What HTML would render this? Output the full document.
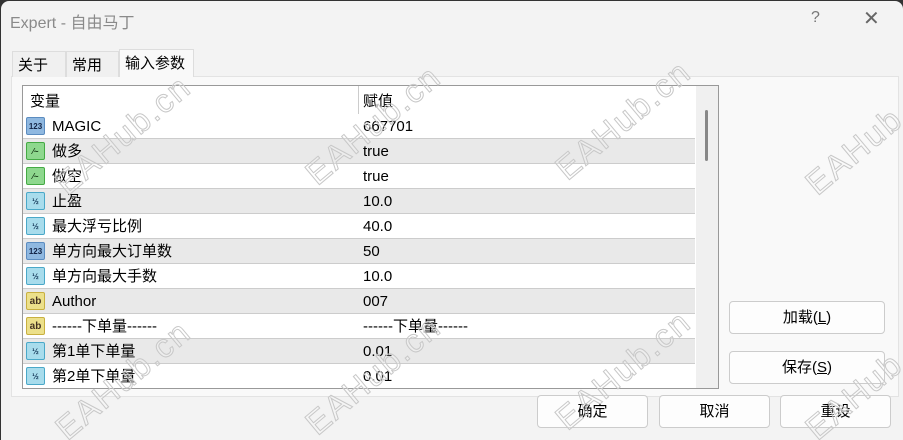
<!DOCTYPE html><html><head><meta charset="utf-8"><style>
*{margin:0;padding:0;box-sizing:border-box}
html,body{width:903px;height:440px;overflow:hidden}
body{background:#333;font-family:"Liberation Sans","Noto Sans CJK SC",sans-serif;font-size:15px;color:#000;position:relative}
.win{position:absolute;left:1px;top:1px;width:902px;height:439px;background:#f3f3f3;border-radius:8px 8px 0 0}
.title{position:absolute;left:9px;top:8px;font-size:16px;color:#8a8a8a}
.tb{position:absolute;top:8px;font-size:16px;color:#777}
.tab{position:absolute;top:50px;height:26px;border:1px solid #ddd;border-bottom:none;background:#f0f0f0;font-size:15px;padding:2px 5px}
.panel{position:absolute;left:10px;top:75px;width:888px;height:321px;background:#f9f9f9;border:1px solid #e3e3e3}
.tbl{position:absolute;left:21px;top:84px;width:697px;height:304px;border:1px solid #999;background:#fff;overflow:hidden}
.row{position:absolute;left:0;width:672px;height:25px;border-bottom:1px solid #ccc}
.row span{position:absolute;top:0;line-height:25px;font-size:15px}
.c1{left:29px}.c2{left:340px}
.split{position:absolute;left:335px;top:0;width:1px;height:303px;background:#ccc}
.ic{position:absolute;left:3px;top:3px;width:19px;height:18px;border-radius:2px;font-size:8px;font-weight:bold;text-align:center;line-height:17px}
.sb{position:absolute;left:673px;top:0;width:22px;height:303px;background:#f0f0f0}
.thumb{position:absolute;left:9px;top:24px;width:3px;height:51px;background:#888;border-radius:2px}
.btn{position:absolute;height:33px;border:1px solid #ccc;border-radius:4px;background:#fdfdfd;text-align:center;line-height:31px;font-size:15px}
.wm{position:absolute;font-size:33px;font-family:"Liberation Sans",sans-serif;color:rgba(255,255,255,0.2);-webkit-text-stroke:1px #c8c8c8;transform:rotate(-40deg);transform-origin:center;white-space:nowrap;letter-spacing:2px}
</style></head><body><div class="win">
<div class="title">Expert - 自由马丁</div>
<div class="tb" style="left:810px">?</div>
<div class="tb" style="left:862px;font-size:20px;top:5px;color:#666">✕</div>
<div class="panel"></div>
<div class="tab" style="left:11px;width:54px">关于</div>
<div class="tab" style="left:65px;width:53px">常用</div>
<div class="tab" style="left:118px;top:48px;height:28px;width:75px;background:#f9f9f9;border-color:#ddd">输入参数</div>
<div class="tbl">
<div class="split"></div>
<div class="row" style="top:0;height:28px;border-bottom:none"><span style="left:7px;top:3px">变量</span><span class="c2" style="top:3px">赋值</span></div>
<div class="row" style="top:28px;background:#fff"><div class="ic" style="background:#8fb8e0;border:1px solid #5b8cc0;color:#124">123</div><span class="c1">MAGIC</span><span class="c2">667701</span></div>
<div class="row" style="top:53px;background:#e9e9e9"><div class="ic" style="background:#8ed88e;border:1px solid #4a4;color:#131">⁄~</div><span class="c1">做多</span><span class="c2">true</span></div>
<div class="row" style="top:78px;background:#fff"><div class="ic" style="background:#8ed88e;border:1px solid #4a4;color:#131">⁄~</div><span class="c1">做空</span><span class="c2">true</span></div>
<div class="row" style="top:103px;background:#e9e9e9"><div class="ic" style="background:#a8dcec;border:1px solid #4aa8c8;color:#135">½</div><span class="c1">止盈</span><span class="c2">10.0</span></div>
<div class="row" style="top:128px;background:#fff"><div class="ic" style="background:#a8dcec;border:1px solid #4aa8c8;color:#135">½</div><span class="c1">最大浮亏比例</span><span class="c2">40.0</span></div>
<div class="row" style="top:153px;background:#e9e9e9"><div class="ic" style="background:#8fb8e0;border:1px solid #5b8cc0;color:#124">123</div><span class="c1">单方向最大订单数</span><span class="c2">50</span></div>
<div class="row" style="top:178px;background:#fff"><div class="ic" style="background:#a8dcec;border:1px solid #4aa8c8;color:#135">½</div><span class="c1">单方向最大手数</span><span class="c2">10.0</span></div>
<div class="row" style="top:203px;background:#e9e9e9"><div class="ic" style="background:#ece08a;border:1px solid #c8b040;color:#432;font-size:10px">ab</div><span class="c1">Author</span><span class="c2">007</span></div>
<div class="row" style="top:228px;background:#fff"><div class="ic" style="background:#ece08a;border:1px solid #c8b040;color:#432;font-size:10px">ab</div><span class="c1">------下单量------</span><span class="c2">------下单量------</span></div>
<div class="row" style="top:253px;background:#e9e9e9"><div class="ic" style="background:#a8dcec;border:1px solid #4aa8c8;color:#135">½</div><span class="c1">第1单下单量</span><span class="c2">0.01</span></div>
<div class="row" style="top:278px;background:#fff"><div class="ic" style="background:#a8dcec;border:1px solid #4aa8c8;color:#135">½</div><span class="c1">第2单下单量</span><span class="c2">0.01</span></div>
<div class="sb"><div class="thumb"></div></div>
</div>
<div class="btn" style="left:728px;top:300px;width:156px">加载(<u>L</u>)</div>
<div class="btn" style="left:728px;top:350px;width:156px">保存(<u>S</u>)</div>
<div class="btn" style="left:536px;top:394px;width:111px">确定</div>
<div class="btn" style="left:658px;top:394px;width:111px">取消</div>
<div class="btn" style="left:779px;top:394px;width:111px">重设</div>
<div class="wm" style="left:40px;top:115px">EAHub.cn</div>
<div class="wm" style="left:290px;top:105px">EAHub.cn</div>
<div class="wm" style="left:540px;top:100px">EAHub.cn</div>
<div class="wm" style="left:790px;top:115px">EAHub.cn</div>
<div class="wm" style="left:40px;top:360px">EAHub.cn</div>
<div class="wm" style="left:290px;top:355px">EAHub.cn</div>
<div class="wm" style="left:540px;top:350px">EAHub.cn</div>
<div class="wm" style="left:790px;top:360px">EAHub.cn</div>
</div></body></html>
